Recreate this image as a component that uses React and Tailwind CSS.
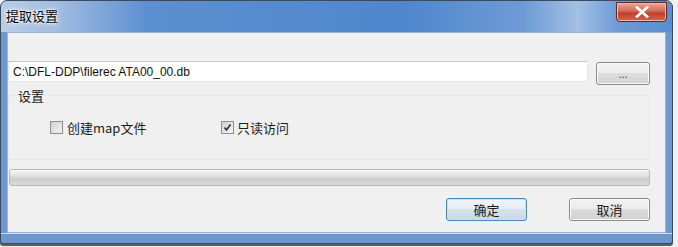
import React from "react";

const cjk = { fontFamily: '"Noto Sans CJK SC", "Liberation Sans", sans-serif' };

function Check({ checked }) {
  return (
    <div className="w-[13px] h-[13px] border border-[#8e8f8f] bg-gradient-to-br from-[#d2d2d2] to-[#f4f4f4] flex items-center justify-center">
      {checked && (
        <svg width="9" height="9" viewBox="0 0 9 9">
          <path d="M1.5 4.5 L3.5 7 L7.5 1.5" fill="none" stroke="#2b2b2b" strokeWidth="1.6" />
        </svg>
      )}
    </div>
  );
}

function Btn({ children, primary }) {
  return (
    <div
      className={`w-[81px] h-[23px] rounded-[3px] border flex items-center justify-center text-[13px] text-[#1b1b1b] ${
        primary
          ? "border-[#4a87b5] bg-[linear-gradient(#f0f4f7_0%,#e6edf2_50%,#d7e2ea_50%,#cad8e3_100%)] shadow-[inset_0_0_0_1px_#bfe6f6]"
          : "border-[#8a8a8a] bg-[linear-gradient(#f2f2f2_0%,#ebebeb_50%,#dddddd_50%,#cfcfcf_100%)] shadow-[inset_0_0_0_1px_#fcfcfc]"
      }`}
      style={cjk}
    >
      {children}
    </div>
  );
}

export default function App() {
  return (
    <div className="w-[678px] h-[247px] bg-[#eef0f2] overflow-hidden">
      <div className="w-[673px] h-[244px] rounded-t-[7px] rounded-b-[3px] border border-[#3a4a60] bg-[#6e97ce] flex flex-col shadow-[0_2px_0_#5a5f66]">
        {/* title bar */}
        <div className="relative h-[31px] flex items-center pl-[5px] rounded-t-[6px] bg-[linear-gradient(90deg,#b8cce5_0%,#a4bde0_8%,#5c8fd1_22%,#4f86cd_60%,#6e9bd6_78%,#a3c0e4_86%,#6d9ad5_92%,#5a8dd1_100%)]">
          <span
            className="text-[13px] text-black [text-shadow:0_0_6px_#ffffff,0_0_3px_#ffffff,0_0_2px_#ffffff] -mt-[1px]"
            style={cjk}
          >
            提取设置
          </span>
          <div className="absolute right-[5px] top-[1px] w-[51px] h-[20px] rounded-b-[4px] border border-[#5b2a26] bg-[linear-gradient(#e9a89a_0%,#d46a55_45%,#c0402c_55%,#d4634a_100%)] flex items-center justify-center shadow-[inset_0_0_0_1px_#f0b8aa]">
            <svg width="14" height="12" viewBox="0 0 14 12">
              <path d="M2 1.5 L12 10.5 M12 1.5 L2 10.5" stroke="#ffffff" strokeWidth="2.8" strokeLinecap="square" />
            </svg>
          </div>
        </div>
        {/* client */}
        <div className="mx-[6px] h-[201px] bg-[#f0f0f0] border border-[#9bb4d4] flex flex-col">
          <div className="flex mt-[28px]">
            <div
              className="w-[580px] h-[21px] bg-white border border-[#e3e6ea] border-t-[#c4c7cb] flex items-center pl-[4px] text-[12px] text-[#111]"
              style={{ fontFamily: '"Liberation Sans", sans-serif' }}
            >
              C:\DFL-DDP\filerec ATA00_00.db
            </div>
            <div className="ml-[8px] mt-[1px] w-[54px] h-[23px] rounded-[3px] border border-[#8a8a8a] bg-[linear-gradient(#f4f4f4_0%,#ececec_50%,#dedede_50%,#d3d3d3_100%)] shadow-[inset_0_0_0_1px_#fcfcfc] flex items-center justify-center text-[11px] text-[#555] leading-none">
              ...
            </div>
          </div>
          <div className="relative mt-[10px] w-[642px] h-[65px] border border-[#e6e6e6] rounded-[2px]">
            <span className="absolute left-[8px] -top-[9px] bg-[#f0f0f0] px-[1px] text-[13px] leading-[17px] text-[#1b1b1b]" style={cjk}>
              设置
            </span>
            <div className="flex items-center mt-[22px] ml-[41px] text-[13px] text-[#1b1b1b]" style={cjk}>
              <Check />
              <span className="ml-[4px] w-[154px]">创建map文件</span>
              <Check checked />
              <span className="ml-[3px]">只读访问</span>
            </div>
          </div>
          <div className="mt-[9px] ml-[1px] w-[641px] h-[17px] rounded-[3px] border border-[#b8b8b8] bg-[linear-gradient(#f4f4f4_0%,#e0e0e0_40%,#cdcdcd_60%,#dcdcdc_100%)] shadow-[inset_0_1px_0_#fafafa]" />
          <div className="flex mt-[12px] ml-[438px] gap-[42px]">
            <Btn primary>确定</Btn>
            <Btn>取消</Btn>
          </div>
        </div>
        <div className="flex-1 border-t border-[#cfdcec]" />
      </div>
    </div>
  );
}
